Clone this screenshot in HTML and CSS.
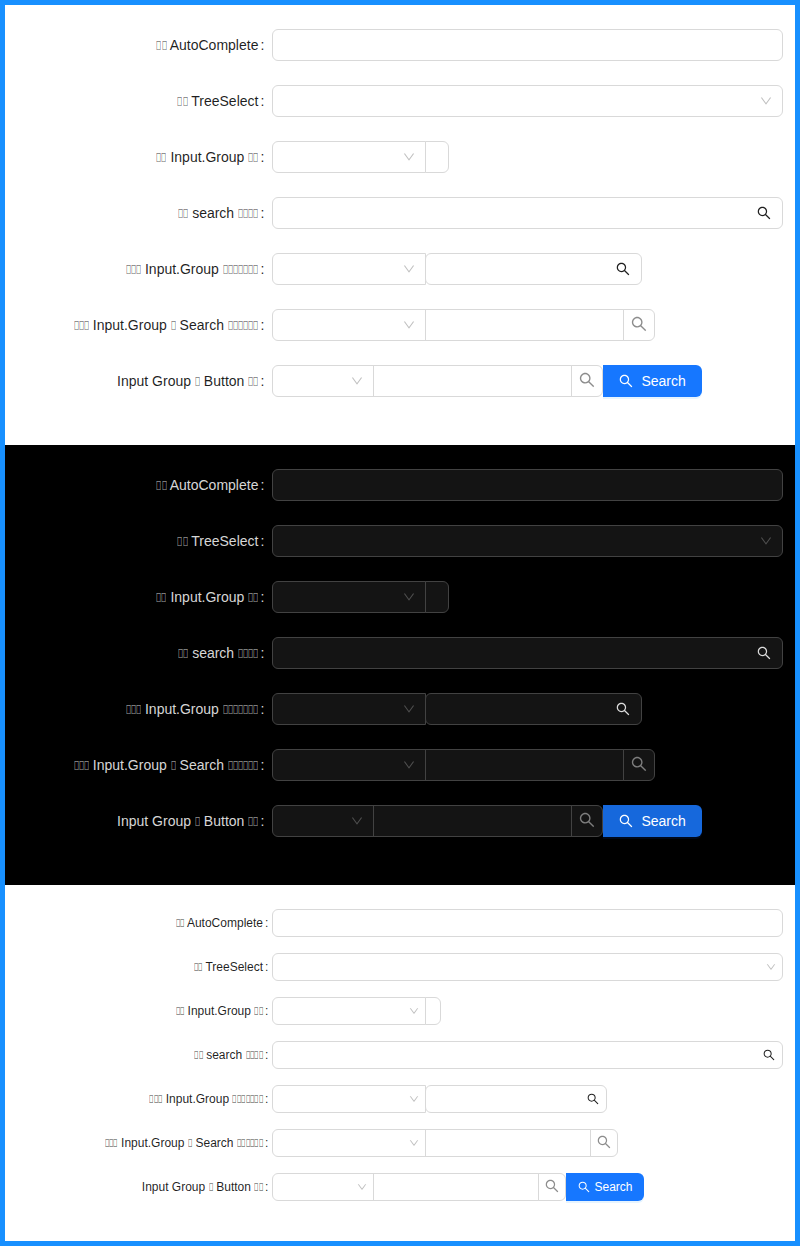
FILE: index.html
```
<!DOCTYPE html>
<html lang="zh">
<head>
<meta charset="utf-8">
<title>Input.Group</title>
<link rel="stylesheet" href="styles.css">
</head>
<body>
<svg class="sprite" aria-hidden="true">
  <symbol id="search" viewBox="64 64 896 896"><path d="M909.6 854.5L649.9 594.8C690.2 542.7 712 479 712 412c0-80.2-31.3-155.4-87.9-212.1-56.6-56.7-132-87.9-212.1-87.9s-155.5 31.3-212.1 87.9C143.2 256.5 112 331.8 112 412c0 80.1 31.3 155.5 87.9 212.1C256.5 680.8 331.8 712 412 712c67 0 130.6-21.8 182.7-62l259.7 259.6a8.2 8.2 0 0011.6 0l43.6-43.5a8.2 8.2 0 000-11.6zM570.4 570.4C528 612.7 471.8 636 412 636s-116-23.3-158.4-65.6C211.3 528 188 471.8 188 412s23.3-116.1 65.6-158.4C296 211.3 352.2 188 412 188s116.1 23.2 158.4 65.6S636 352.2 636 412s-23.3 116.1-65.6 158.4z"/></symbol>
  <symbol id="down" viewBox="64 64 896 896"><path d="M884 256h-75c-5.1 0-9.9 2.5-12.9 6.6L512 654.2 227.9 262.6c-3-4.1-7.8-6.6-12.9-6.6h-75c-6.5 0-10.3 7.4-6.5 12.7l352.6 486.1c12.8 17.6 39 17.6 51.7 0l352.6-486.1c3.9-5.3.1-12.7-6.4-12.7z"/></symbol>
</svg>
<main class="frame" id="frame"></main>
<template id="form">
  <div class="row"><label class="label">## AutoComplete</label><div class="control"><div class="box full"></div></div></div>
  <div class="row"><label class="label">## TreeSelect</label><div class="control"><div class="box full"><svg class="arrow"><use href="#down"/></svg></div></div></div>
  <div class="row"><label class="label">## Input.Group ##</label><div class="control"><div class="box select first"><svg class="arrow"><use href="#down"/></svg></div><div class="box stub last"></div></div></div>
  <div class="row"><label class="label">## search ####</label><div class="control"><div class="box full"><svg class="suffix"><use href="#search"/></svg></div></div></div>
  <div class="row"><label class="label">### Input.Group #######</label><div class="control"><div class="box select first"><svg class="arrow"><use href="#down"/></svg></div><div class="box affix"><svg class="suffix"><use href="#search"/></svg></div></div></div>
  <div class="row"><label class="label">### Input.Group # Search ######</label><div class="control"><div class="box select first"><svg class="arrow"><use href="#down"/></svg></div><div class="box field"></div><div class="box addon last"><svg class="addon-icon"><use href="#search"/></svg></div></div></div>
  <div class="row"><label class="label">Input Group # Button ##</label><div class="control"><div class="box short first"><svg class="arrow"><use href="#down"/></svg></div><div class="box field"></div><div class="box addon last"><svg class="addon-icon"><use href="#search"/></svg></div><button class="button"><svg class="button-icon"><use href="#search"/></svg><span>Search</span></button></div></div>
</template>
<script src="main.js"></script>
</body>
</html>
```
FILE: main.js
```
const frame = document.getElementById('frame');
const form = document.getElementById('form');
for (const theme of ['light', 'dark', 'compact']) {
  const section = document.createElement('section');
  section.className = 'section ' + theme;
  section.append(form.content.cloneNode(true));
  for (const label of section.querySelectorAll('.label')) {
    label.innerHTML = label.textContent.replaceAll('#', '<span class="glyph">\uE8A3</span>');
  }
  frame.append(section);
}
```
FILE: styles.css
```
* { box-sizing: border-box; }
body { margin: 0; font-family: "Liberation Sans", sans-serif; }
.sprite { display: none; }
.frame { border: 5px solid #1890ff; width: 800px; height: 1246px; }

.section {
  --h: 32px;
  --gap: 24px;
  --font: 14px;
  --text: rgba(0, 0, 0, 0.88);
  --muted: rgba(0, 0, 0, 0.45);
  --faint: rgba(0, 0, 0, 0.25);
  --border: #d9d9d9;
  --fill: #fff;
  --primary: #1677ff;
  --shadow: rgba(5, 145, 255, 0.1);
  --arrow: 12px;
  --arrow-end: 10px;
  --icon-end: 11px;
  --addon-icon: 16px;
  --addon: 32px;
  --field: 199px;
  --affix: 217px;
  --stub: 24px;
  --colon-end: 8px;
  --button: 99px;
  --button-start: 16px;
  --button-gap: 8.1px;
  padding: 24px 11px 24px 0;
  background: #fff;
  color: var(--text);
  font-size: var(--font);
}
.dark {
  --text: rgba(255, 255, 255, 0.85);
  --muted: rgba(255, 255, 255, 0.45);
  --faint: rgba(255, 255, 255, 0.25);
  --border: #424242;
  --fill: #141414;
  --primary: #1668dc;
  --shadow: rgba(0, 60, 180, 0.15);
  background: #000;
}
.compact {
  --h: 28px;
  --gap: 16px;
  --font: 12px;
  --arrow: 10px;
  --arrow-end: 6px;
  --icon-end: 7px;
  --addon-icon: 14px;
  --addon: 28px;
  --field: 166px;
  --affix: 182px;
  --stub: 16px;
  --colon-end: 4px;
  --button: 78px;
  --button-start: 12px;
  --button-gap: 4.2px;
}

.row { display: flex; height: var(--h); margin-bottom: var(--gap); }
.label { width: 267.33px; flex: none; text-align: right; line-height: var(--h); white-space: nowrap; }
.label::after { content: ":"; margin: 0 var(--colon-end) 0 2px; }
/* Condensed placeholder glyph */
.glyph { display: inline-block; width: 0.364em; transform: scale(0.485, 0.95); transform-origin: 0 50%; text-align: left; opacity: 0.75; -webkit-text-stroke: 0.25px currentColor; }
.control { flex: 1; display: flex; min-width: 0; }

.box {
  display: flex;
  flex: none;
  align-items: center;
  justify-content: flex-end;
  height: var(--h);
  border: 1px solid var(--border);
  border-radius: 6px;
  background: var(--fill);
}
.box + .box { margin-left: -1px; }
.full { width: 511px; }
.select { width: 154px; }
.short { width: 102px; }
.stub { width: var(--stub); }
.affix { width: var(--affix); }
.field { width: var(--field); border-radius: 0; }
.addon { width: var(--addon); justify-content: center; }
.first { border-radius: 6px 0 0 6px; }
.last { border-radius: 0 6px 6px 0; }

svg { display: block; fill: currentColor; }
.arrow { width: var(--arrow); height: var(--arrow); margin-right: var(--arrow-end); color: var(--faint); }
.suffix { width: var(--font); height: var(--font); margin-right: var(--icon-end); }
.addon-icon { width: var(--addon-icon); height: var(--addon-icon); margin-bottom: 2px; color: var(--muted); }

.button {
  display: flex;
  flex: none;
  align-items: center;
  gap: var(--button-gap);
  width: var(--button);
  height: var(--h);
  padding: 0 0 0 var(--button-start);
  border: 0;
  border-radius: 0 6px 6px 0;
  background: var(--primary);
  box-shadow: 0 2px 0 var(--shadow);
  color: #fff;
  font: inherit;
}
.button-icon { width: var(--font); height: var(--font); }
```
